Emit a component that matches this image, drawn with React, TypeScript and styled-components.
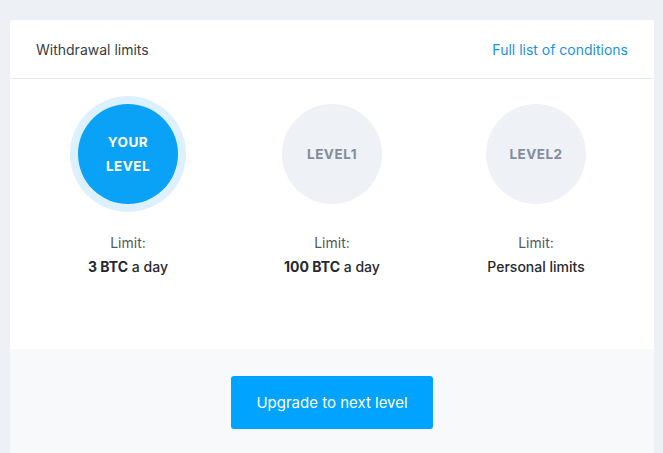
import React from "react";
import styled, { createGlobalStyle } from "styled-components";

const GlobalStyle = createGlobalStyle`
  body {
    margin: 0;
    background: #edf0f4;
    font-family: Inter, "Open Sans", Arial, sans-serif;
  }
`;

const Card = styled.div`
  margin: 20px 9px 0 10px;
  background: #ffffff;
  border-radius: 3px 3px 0 0;
  overflow: hidden;
`;

const Header = styled.div`
  display: flex;
  align-items: center;
  justify-content: space-between;
  height: 58px;
  padding: 0 26px;
  border-bottom: 1px solid #e8ebef;
  font-size: 14px;
`;

const Title = styled.span`
  color: #3a3d42;
`;

const Link = styled.a`
  color: #1b91e3;
  text-decoration: none;
  cursor: pointer;
`;

const Levels = styled.div`
  display: grid;
  grid-template-columns: repeat(3, 1fr);
  padding: 17px 16px 70px;
`;

const Level = styled.div`
  display: flex;
  flex-direction: column;
  align-items: center;
`;

const CircleSlot = styled.div`
  width: 116px;
  height: 116px;
  display: flex;
  align-items: center;
  justify-content: center;
`;

const Circle = styled.div<{ $active?: boolean }>`
  width: 100px;
  height: 100px;
  border-radius: 50%;
  display: flex;
  align-items: center;
  justify-content: center;
  text-align: center;
  font-weight: 700;
  font-size: 13.5px;
  line-height: 24px;
  letter-spacing: 0.5px;
  background: ${(p) => (p.$active ? "#0aa2f7" : "#eef1f5")};
  color: ${(p) => (p.$active ? "#ffffff" : "#858c9a")};
  box-shadow: ${(p) => (p.$active ? "0 0 0 8px #dcf0fd" : "none")};
`;

const LimitText = styled.div`
  margin-top: 19px;
  font-size: 14px;
  line-height: 24px;
  text-align: center;
  color: #55585e;
`;

const LimitValue = styled.div`
  color: #26292e;
  font-weight: 500;
  b {
    font-weight: 700;
  }
`;

const Footer = styled.div`
  display: flex;
  justify-content: center;
  background: #f7f9fb;
  padding: 27px 0 40px;
`;

const Button = styled.button`
  width: 202px;
  height: 53px;
  border: none;
  border-radius: 3px;
  background: #00a3ff;
  color: #ffffff;
  font-family: inherit;
  font-size: 15px;
  cursor: pointer;
`;

const levels = [
  { label: ["YOUR", "LEVEL"], active: true, strong: "3 BTC", rest: " a day" },
  { label: ["LEVEL1"], active: false, strong: "100 BTC", rest: " a day" },
  { label: ["LEVEL2"], active: false, strong: "", rest: "Personal limits" },
];

export default function App() {
  return (
    <>
      <GlobalStyle />
      <Card>
        <Header>
          <Title>Withdrawal limits</Title>
          <Link>Full list of conditions</Link>
        </Header>
        <Levels>
          {levels.map((level, key) => (
            <Level key={key}>
              <CircleSlot>
                <Circle $active={level.active}>
                  <div>
                    {level.label.map((line) => (
                      <div key={line}>{line}</div>
                    ))}
                  </div>
                </Circle>
              </CircleSlot>
              <LimitText>
                <div>Limit:</div>
                <LimitValue>
                  {level.strong && <b>{level.strong}</b>}
                  {level.rest}
                </LimitValue>
              </LimitText>
            </Level>
          ))}
        </Levels>
        <Footer>
          <Button>Upgrade to next level</Button>
        </Footer>
      </Card>
    </>
  );
}
